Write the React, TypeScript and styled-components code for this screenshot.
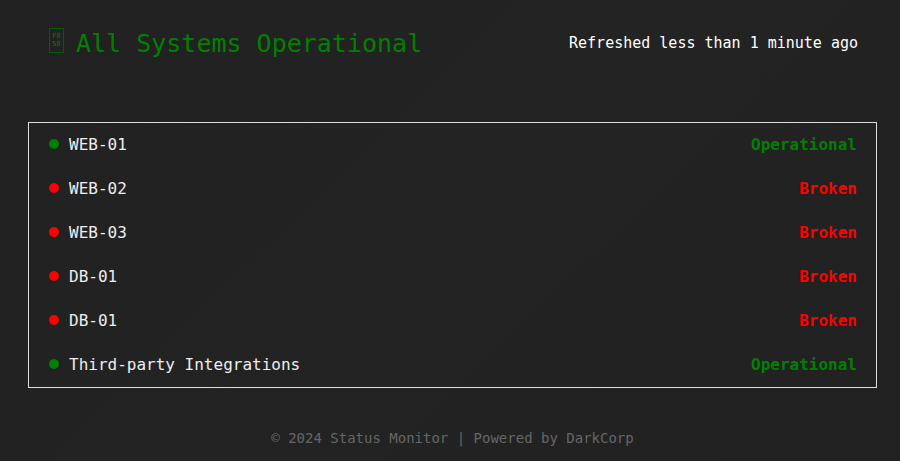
import React from "react";
import styled, { createGlobalStyle } from "styled-components";

const Global = createGlobalStyle`
  html, body { margin: 0; padding: 0; }
  body {
    background: linear-gradient(135deg, #212121 0%, #232323 50%, #212121 100%);
    min-height: 461px;
    font-family: "DejaVu Sans Mono", monospace;
    color: #eeeeee;
  }
`;

const Page = styled.div`
  padding: 20px 23px 0 28px;
  display: flex;
  flex-direction: column;
`;

const Header = styled.header`
  display: flex;
  align-items: center;
  justify-content: space-between;
  height: 46px;
  padding: 0 19px 0 21px;
`;

const Title = styled.h1`
  margin: 0;
  display: flex;
  align-items: center;
  gap: 12px;
  font-size: 25px;
  font-weight: normal;
  color: #008000;
`;

const MissingGlyph = styled.span`
  box-sizing: border-box;
  width: 15px;
  height: 25px;
  border: 1px solid #005f00;
  display: flex;
  flex-direction: column;
  align-items: center;
  justify-content: center;
  font-family: "DejaVu Sans Mono", monospace;
  font-size: 7px;
  line-height: 8px;
  color: #008000;
  margin-top: -6px;
`;

const Refreshed = styled.div`
  font-size: 15px;
  color: #ffffff;
`;

const List = styled.ul`
  list-style: none;
  margin: 56px 0 0;
  padding: 0;
  border: 1px solid #dddddd;
`;

const Row = styled.li`
  box-sizing: border-box;
  height: 44px;
  display: flex;
  align-items: center;
  justify-content: space-between;
  padding: 0 19px 2px 20px;
  font-size: 16px;
`;

const Name = styled.div`
  display: flex;
  align-items: center;
  gap: 10px;
  color: #eeeeee;
`;

const Dot = styled.span<{ $ok: boolean }>`
  width: 10px;
  height: 10px;
  border-radius: 50%;
  background: ${(p) => (p.$ok ? "#008000" : "#ff0000")};
`;

const Status = styled.span<{ $ok: boolean }>`
  font-weight: bold;
  color: ${(p) => (p.$ok ? "#008000" : "#ff0000")};
`;

const Footer = styled.footer`
  margin-top: 42px;
  text-align: center;
  font-size: 14px;
  color: #666666;
`;

const services = [
  { name: "WEB-01", ok: true },
  { name: "WEB-02", ok: false },
  { name: "WEB-03", ok: false },
  { name: "DB-01", ok: false },
  { name: "DB-01", ok: false },
  { name: "Third-party Integrations", ok: true },
];

export default function App() {
  return (
    <>
      <Global />
      <Page>
        <Header>
          <Title>
            <MissingGlyph aria-hidden>
              <span>F0</span>
              <span>58</span>
            </MissingGlyph>
            All Systems Operational
          </Title>
          <Refreshed>Refreshed less than 1 minute ago</Refreshed>
        </Header>
        <List>
          {services.map((s, i) => (
            <Row key={i}>
              <Name>
                <Dot $ok={s.ok} />
                {s.name}
              </Name>
              <Status $ok={s.ok}>{s.ok ? "Operational" : "Broken"}</Status>
            </Row>
          ))}
        </List>
        <Footer>© 2024 Status Monitor | Powered by DarkCorp</Footer>
      </Page>
    </>
  );
}
